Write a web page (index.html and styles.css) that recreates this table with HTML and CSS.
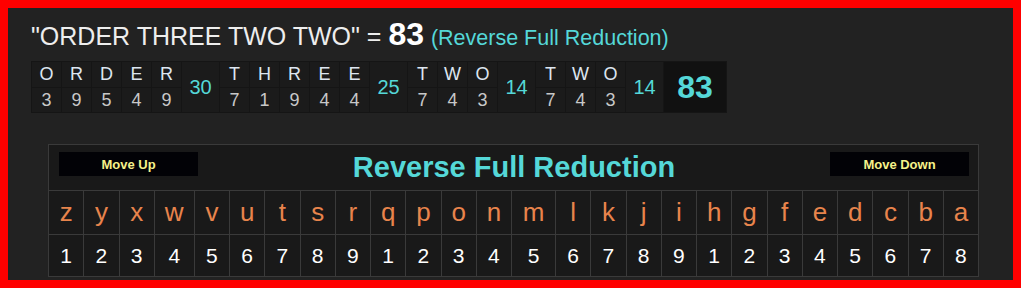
FILE: index.html
```html
<!DOCTYPE html>
<html>
<head>
<meta charset="utf-8">
<link rel="stylesheet" href="styles.css">
</head>
<body>
<div class="frame">
  <h1 class="title">"ORDER THREE TWO TWO" = <b class="total">83</b> <span class="cipher">(Reverse Full Reduction)</span></h1>
  <table class="word">
    <tr>
      <td class="ch">O</td><td class="ch">R</td><td class="ch">D</td><td class="ch">E</td><td class="ch">R</td>
      <td class="sum" rowspan="2">30</td>
      <td class="ch">T</td><td class="ch">H</td><td class="ch">R</td><td class="ch">E</td><td class="ch">E</td>
      <td class="sum" rowspan="2">25</td>
      <td class="ch">T</td><td class="ch">W</td><td class="ch">O</td>
      <td class="sum" rowspan="2">14</td>
      <td class="ch">T</td><td class="ch">W</td><td class="ch">O</td>
      <td class="sum" rowspan="2">14</td>
      <td class="grand" rowspan="2">83</td>
    </tr>
    <tr>
      <td class="num">3</td><td class="num">9</td><td class="num">5</td><td class="num">4</td><td class="num">9</td>
      <td class="num">7</td><td class="num">1</td><td class="num">9</td><td class="num">4</td><td class="num">4</td>
      <td class="num">7</td><td class="num">4</td><td class="num">3</td>
      <td class="num">7</td><td class="num">4</td><td class="num">3</td>
    </tr>
  </table>
  <table class="chart">
    <colgroup>
      <col><col><col><col class="wide-w"><col><col><col><col><col><col><col><col><col><col class="wide-m"><col><col><col><col><col><col><col><col><col><col><col><col>
    </colgroup>
    <tr>
      <td class="head" colspan="26">
        <div class="head-bar">
          <button class="move">Move Up</button>
          <span class="chart-title">Reverse Full Reduction</span>
          <button class="move">Move Down</button>
        </div>
      </td>
    </tr>
    <tr class="letters">
      <td>z</td><td>y</td><td>x</td><td>w</td><td>v</td><td>u</td><td>t</td><td>s</td><td>r</td><td>q</td><td>p</td><td>o</td><td>n</td><td>m</td><td>l</td><td>k</td><td>j</td><td>i</td><td>h</td><td>g</td><td>f</td><td>e</td><td>d</td><td>c</td><td>b</td><td>a</td>
    </tr>
    <tr class="values">
      <td>1</td><td>2</td><td>3</td><td>4</td><td>5</td><td>6</td><td>7</td><td>8</td><td>9</td><td>1</td><td>2</td><td>3</td><td>4</td><td>5</td><td>6</td><td>7</td><td>8</td><td>9</td><td>1</td><td>2</td><td>3</td><td>4</td><td>5</td><td>6</td><td>7</td><td>8</td>
    </tr>
  </table>
</div>
</body>
</html>
```

FILE: styles.css
```css
html, body {
  margin: 0;
  padding: 0;
  background: #ff0000;
}

.frame {
  box-sizing: border-box;
  width: 1021px;
  height: 288px;
  border: 8px solid #ff0000;
  background: #222222;
  padding: 12px 0 0 23px;
  font-family: "Liberation Sans", Arial, sans-serif;
}

.title {
  margin: 0;
  font-weight: normal;
  font-size: 25px;
  line-height: 32px;
  color: #eeeeee;
  white-space: nowrap;
}

.total {
  font-size: 32px;
  line-height: 20px;
  font-weight: bold;
  color: #ffffff;
}

.cipher {
  font-size: 21.5px;
  line-height: 20px;
  color: #55d8d8;
}

.word {
  margin-top: 9px;
  border-collapse: collapse;
  background: #1b1b1b;
}

.word td {
  border: 1px solid #151515;
  padding: 0;
  text-align: center;
  font-size: 18px;
}

.word .ch {
  width: 29px;
  height: 25px;
  color: #dde6f0;
}

.word .num {
  width: 29px;
  height: 24px;
  color: #c8c8c8;
}

.word .sum {
  width: 37px;
  font-size: 20px;
  color: #55d8d8;
}

.word .grand {
  width: 62px;
  background: #111111;
  font-size: 32px;
  font-weight: bold;
  color: #55d8d8;
}

.chart {
  margin: 31px 0 0 17px;
  width: 931px;
  table-layout: fixed;
  border-collapse: collapse;
  background: #191919;
}

.chart .wide-w {
  width: 40px;
}

.chart .wide-m {
  width: 44px;
}

.chart td {
  border: 1px solid #3a3a3a;
  padding: 0;
  text-align: center;
}

.chart .head {
  height: 45px;
}

.head-bar {
  display: flex;
  align-items: center;
  justify-content: space-between;
  padding: 0 9px 0 10px;
}

.move {
  width: 139px;
  height: 24px;
  border: none;
  background: #020206;
  color: #f6f28a;
  font-family: "Liberation Sans", Arial, sans-serif;
  font-size: 13px;
  font-weight: bold;
  padding: 0;
  margin-top: -7px;
}

.chart-title {
  font-size: 29px;
  font-weight: bold;
  color: #55d8d8;
}

.letters td {
  height: 43px;
  font-size: 26px;
  color: #e8844c;
}

.values td {
  height: 41px;
  font-size: 21px;
  color: #ffffff;
}
```
